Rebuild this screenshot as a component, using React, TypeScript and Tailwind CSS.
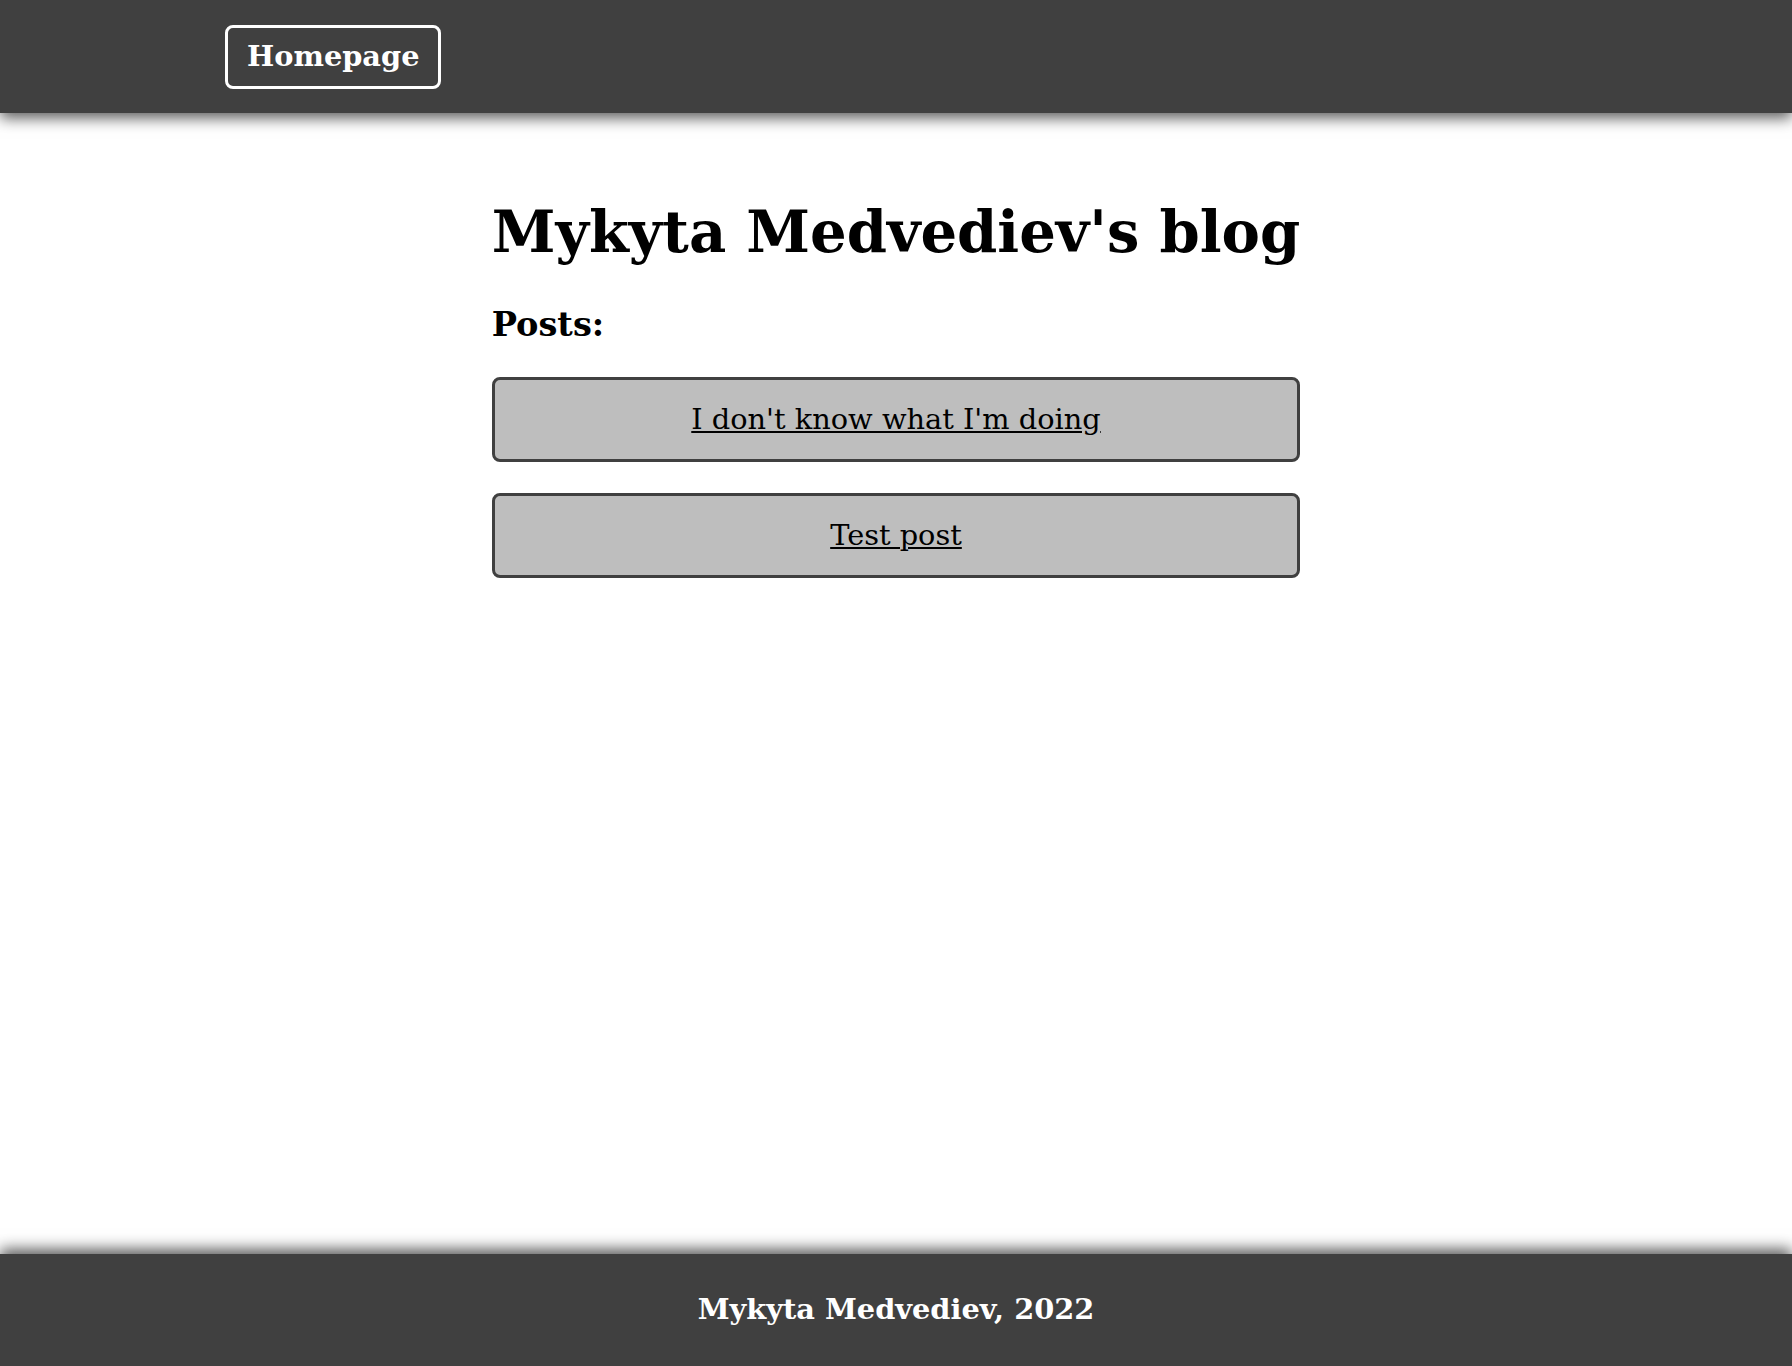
export default function App() {
  const posts = ["I don't know what I'm doing", "Test post"];

  return (
    <div className="min-h-screen flex flex-col bg-white" style={{ fontFamily: '"DejaVu Serif", serif' }}>
      <header className="h-[113px] bg-[#404040] flex items-center pl-[225px] shadow-[0_5px_14px_rgba(0,0,0,0.65)] relative z-10">
        <a href="#" className="h-[64px] px-[19px] flex items-center border-[3px] border-white rounded-[8px] text-white font-bold text-[28.8px]">
          Homepage
        </a>
      </header>

      <main className="flex-1 flex justify-center">
        <div className="pt-[91px] w-fit">
          <h1 className="font-bold text-[57.6px] leading-none text-black">Mykyta Medvediev's blog</h1>
          <h2 className="font-bold text-[33.6px] leading-none mt-[46px] text-black">Posts:</h2>
          <div className="mt-[36px] flex flex-col gap-[31px]">
            {posts.map((p) => (
              <a
                key={p}
                href="#"
                className="h-[85px] flex items-center justify-center bg-[#bebebe] border-[3px] border-[#404040] rounded-[8px] text-[28.8px] text-black underline"
              >
                {p}
              </a>
            ))}
          </div>
        </div>
      </main>

      <footer className="h-[112px] bg-[#404040] flex items-center justify-center shadow-[0_-5px_14px_rgba(0,0,0,0.65)]">
        <span className="text-white font-bold text-[28.8px]">Mykyta Medvediev, 2022</span>
      </footer>
    </div>
  );
}
